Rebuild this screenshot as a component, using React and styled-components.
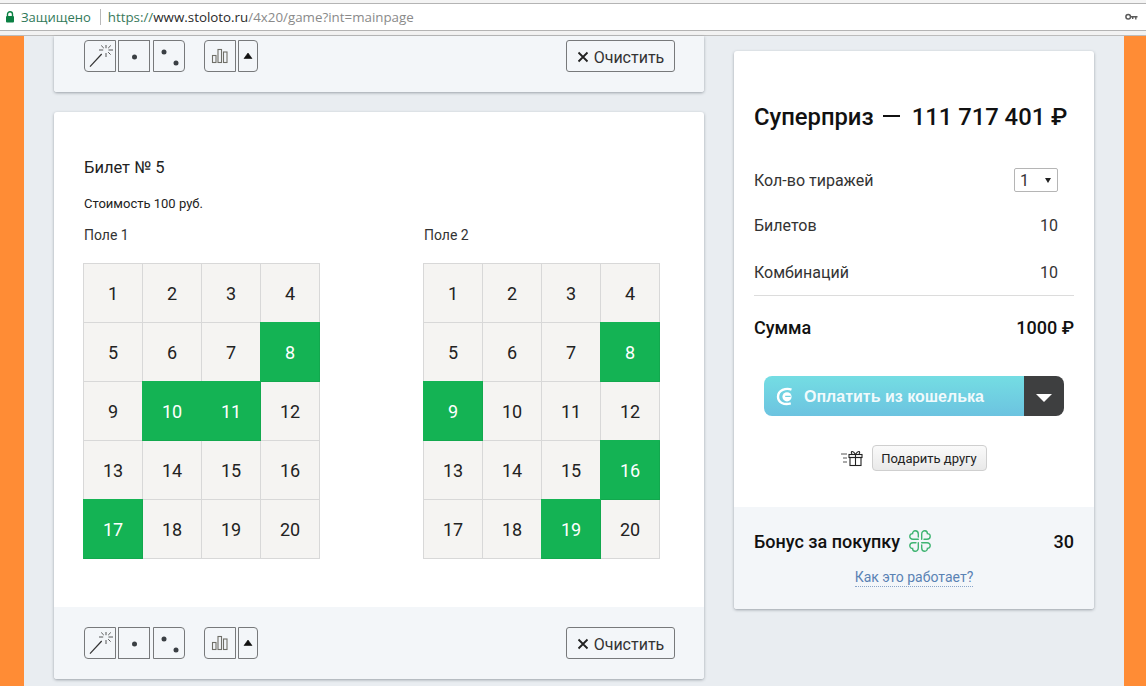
import React from "react";
import styled, { createGlobalStyle } from "styled-components";

const Global = createGlobalStyle`
  html, body { margin: 0; padding: 0; }
  body { font-family: Roboto, "Liberation Sans", sans-serif; color: #1a1a1a; background: #e9edf1; overflow: hidden; }
  * { box-sizing: border-box; }
`;

const Shell = styled.div`
  width: 1146px;
  height: 686px;
  display: flex;
  flex-direction: column;
  overflow: hidden;
`;

const Chrome = styled.header`
  height: 36px;
  flex: none;
  background: #f2f2f2;
  border-top: 3px solid #f4f4f4;
  border-bottom: 1px solid #bcbcbc;
`;

const AddressBar = styled.div`
  height: 28px;
  background: #fff;
  border-top: 1px solid #b4b4b4;
  border-bottom: 1px solid #b4b4b4;
  display: flex;
  align-items: center;
  padding: 0 8px 0 4px;
  font-family: "Open Sans", sans-serif;
  white-space: nowrap;
`;

const Secure = styled.span`
  color: #31795a;
  margin-left: 5px;
  font-size: 13px;
`;

const Sep = styled.span`
  width: 1px;
  height: 16px;
  background: #b9b9b9;
  margin: 0 7px 0 9px;
`;

const Url = styled.span`
  color: #8a8a8a;
  font-size: 13.35px;
  b { font-weight: 400; color: #2a2a2a; }
  i { font-style: normal; color: #3a7a5c; }
`;

const KeyWrap = styled.span`
  margin-left: auto;
  display: flex;
`;

const Page = styled.div`
  flex: 1;
  display: flex;
  min-height: 0;
`;

const Stripe = styled.div`
  width: ${(p) => p.$w}px;
  flex: none;
  background: #ff8c35;
`;

const Content = styled.main`
  flex: 1;
  display: flex;
  gap: 30px;
  padding: 0 30px;
  align-items: flex-start;
  min-width: 0;
`;

const LeftCol = styled.div`
  width: 650px;
  flex: none;
  display: flex;
  flex-direction: column;
  gap: 20px;
`;

const Card = styled.section`
  background: #fff;
  border-radius: 3px;
  box-shadow: 0 1px 3px rgba(60, 70, 80, 0.45);
  overflow: hidden;
`;

const TopCard = styled(Card)`
  border-radius: 0 0 3px 3px;
`;

const Toolbar = styled.div`
  background: #f3f6f9;
  display: flex;
  align-items: center;
  padding: ${(p) => (p.$top ? "4px" : "20px")} 29px 20px 30px;
`;

const TB = styled.button`
  width: ${(p) => p.$w || 32}px;
  height: 32px;
  padding: 0;
  margin-left: ${(p) => p.$ml || 0}px;
  background: transparent;
  border: 1px solid #77797b;
  border-radius: ${(p) => p.$r || "0"};
  display: flex;
  align-items: center;
  justify-content: center;
  color: #222;
`;

const Clear = styled.button`
  margin-left: auto;
  width: 109px;
  height: 32px;
  border: 1px solid #77797b;
  border-radius: 3px;
  background: transparent;
  display: flex;
  align-items: center;
  justify-content: center;
  gap: 5px;
  padding: 2px 0 0;
  font-family: Roboto, sans-serif;
  font-size: 16px;
  color: #333;
`;

const Ticket = styled.div`
  height: 495px;
  padding: 46px 0 0 29px;
`;

const TicketTitle = styled.h2`
  margin: 0 0 0 1px;
  font-size: 16.5px;
  font-weight: 400;
  line-height: 19px;
  color: #222;
`;

const Price = styled.p`
  margin: 19px 0 0 1px;
  font-size: 13px;
  line-height: 16px;
  color: #222;
`;

const Fields = styled.div`
  display: flex;
  gap: 103px;
  margin-top: 15px;
`;

const Field = styled.div`
  width: 237px;
`;

const FieldLabel = styled.div`
  margin-left: 1px;
  font-size: 14px;
  line-height: 16px;
  color: #333;
  margin-bottom: 20px;
`;

const Grid = styled.div`
  display: grid;
  grid-template-columns: repeat(4, 59px);
  grid-auto-rows: 59px;
  width: 237px;
  border-top: 1px solid #d8d8d8;
  border-left: 1px solid #d8d8d8;
`;

const Cell = styled.div`
  display: flex;
  align-items: center;
  justify-content: center;
  font-size: 18px;
  background: ${(p) => (p.$on ? "#14b354" : "#f5f4f2")};
  color: ${(p) => (p.$on ? "#fff" : "#222")};
  border-right: 1px solid ${(p) => (p.$on ? "#12a84e" : "#d8d8d8")};
  border-bottom: 1px solid ${(p) => (p.$on ? "#12a84e" : "#d8d8d8")};
  box-shadow: ${(p) =>
    p.$on ? "0 -1px 0 #14b354, -1px 0 0 #14b354, -1px -1px 0 #14b354" : "none"};
`;

const Side = styled(Card)`
  width: 360px;
  flex: none;
  margin-top: 15px;
`;

const SideMain = styled.div`
  height: 456px;
  padding: 52px 20px 0;
`;

const Jackpot = styled.div`
  display: flex;
  align-items: center;
  justify-content: flex-start;
  font-size: 23.8px;
  font-weight: 500;
  line-height: 28px;
  color: #111;
  white-space: nowrap;
`;

const Dash = styled.span`
  width: 17px;
  height: 2px;
  background: #111;
  margin: 0 12px 2px 9px;
`;

const Row = styled.div`
  display: flex;
  align-items: center;
  justify-content: space-between;
  height: ${(p) => p.$h || 24}px;
  margin-top: ${(p) => p.$mt || 0}px;
  font-size: 16px;
  color: #333;
`;

const Num = styled.span`
  margin-right: 16px;
`;

const Select = styled.div`
  width: 44px;
  height: 24px;
  margin-right: 16px;
  border: 1px solid #b5b5b5;
  border-radius: 2px;
  display: flex;
  align-items: center;
  justify-content: space-between;
  padding: 0 6px 0 5px;
  color: #333;
`;

const Caret = styled.span`
  width: 0;
  height: 0;
  border-left: 3px solid transparent;
  border-right: 3px solid transparent;
  border-top: 5px solid #222;
`;

const Divider = styled.div`
  height: 1px;
  background: #dcdcdc;
  margin-top: 11px;
`;

const Total = styled(Row)`
  font-size: 18px;
  font-weight: 500;
  color: #111;
  margin-top: 19px;
`;

const Pay = styled.div`
  width: 300px;
  height: 40px;
  margin: 37px 0 0 10px;
  display: flex;
  border-radius: 8px;
  overflow: hidden;
`;

const PayMain = styled.div`
  flex: 1;
  background: linear-gradient(#74dde3, #6cc3e0);
  display: flex;
  align-items: center;
  padding: 1px 0 0 12px;
  gap: 9px;
  color: rgba(255, 255, 255, 0.92);
  font-family: "Liberation Sans", Arial, sans-serif;
  font-weight: 700;
  font-size: 16px;
`;

const PayArrow = styled.div`
  width: 40px;
  background: #3e3f40;
  display: flex;
  align-items: center;
  justify-content: center;
  padding-top: 3px;
`;

const ArrowDown = styled.span`
  width: 0;
  height: 0;
  border-left: 8px solid transparent;
  border-right: 8px solid transparent;
  border-top: 8px solid #fff;
`;

const GiftRow = styled.div`
  display: flex;
  align-items: center;
  justify-content: center;
  gap: 8px;
  margin: 29px 0 0 -2px;
`;

const GiftBtn = styled.button`
  width: 115px;
  height: 26px;
  padding: 0;
  border: 1px solid #cfcfcf;
  border-radius: 4px;
  background: linear-gradient(#fafafa, #e9e9e9);
  font-family: Roboto, sans-serif;
  font-size: 13px;
  color: #222;
`;

const SideFoot = styled.div`
  height: 102px;
  background: #f3f6f9;
  padding: 22px 20px 0;
`;

const Bonus = styled.div`
  display: flex;
  align-items: center;
  height: 24px;
  font-size: 18px;
  font-weight: 500;
  color: #111;
`;

const BonusValue = styled.span`
  margin-left: auto;
`;

const CloverWrap = styled.span`
  display: flex;
  margin-left: 8px;
`;

const HowWrap = styled.div`
  text-align: center;
  margin-top: 14px;
`;

const How = styled.a`
  font-size: 14px;
  line-height: 18px;
  display: inline-block;
  color: #5a82b4;
  border-bottom: 1px dotted #8aa5c8;
`;

const Lock = () => (
  <svg width="12" height="14" viewBox="0 0 12 14">
    <path d="M3.5 6V4.2a2.5 2.5 0 0 1 5 0V6" fill="none" stroke="#0b8043" strokeWidth="1.4" />
    <rect x="2" y="6" width="8" height="6.5" rx="1" fill="#0b8043" />
  </svg>
);

const Key = () => (
  <svg width="13" height="8" viewBox="0 0 13 8">
    <circle cx="3.2" cy="3.8" r="2.3" fill="none" stroke="#5a5a5a" strokeWidth="1.5" />
    <path d="M5.5 3h7v1.5h-1V6.5h-1.4V4.5H8.4V6H7V4.5H5.5z" fill="#5a5a5a" />
  </svg>
);

const Wand = () => (
  <svg width="30" height="30" viewBox="0 0 30 30">
    <path d="M5 25.7 L16.7 13" stroke="#333" strokeWidth="1.2" />
    <path d="M21 4v3.2M21 12v4M14 9h4.2M23.5 9h4.5M16.2 4.5l2.6 2.6M25.8 4.5l-2.6 2.6M23.2 11.2l2.4 2.4" stroke="#444" strokeWidth="0.9" fill="none" />
  </svg>
);

const OneDot = () => (
  <svg width="30" height="30" viewBox="0 0 30 30">
    <circle cx="15.5" cy="16" r="2.5" fill="#3a3f44" />
  </svg>
);

const TwoDots = () => (
  <svg width="30" height="30" viewBox="0 0 30 30">
    <circle cx="10" cy="11" r="2.5" fill="#3a3f44" />
    <circle cx="22" cy="22" r="2.5" fill="#3a3f44" />
  </svg>
);

const Bars = () => (
  <svg width="20" height="20" viewBox="0 0 20 20">
    <g fill="none" stroke="#6f6f68" strokeWidth="1.1">
      <rect x="2.5" y="9.5" width="3.5" height="7" />
      <rect x="8" y="3.5" width="3.5" height="13" />
      <rect x="13.5" y="6" width="3.5" height="10.5" />
    </g>
  </svg>
);

const Up = () => (
  <svg width="10" height="8" viewBox="0 0 10 8">
    <path d="M5 1 L9 6.5 H1 Z" fill="#111" stroke="#111" strokeWidth="0.6" />
  </svg>
);

const Cross = () => (
  <svg width="12" height="12" viewBox="0 0 12 12">
    <path d="M1.5 1.5 L10.5 10.5 M10.5 1.5 L1.5 10.5" stroke="#222" strokeWidth="1.8" />
  </svg>
);

const WalletLogo = () => (
  <svg width="19" height="19" viewBox="0 0 19 19">
    <path d="M15.5 2.6 C10 0.6 2 3 2 9.8 C2 15.5 8 18.4 14.8 16.4" fill="none" stroke="#fff" strokeWidth="2.4" />
    <circle cx="11" cy="9.8" r="4.6" fill="#fff" />
    <path d="M9.2 9.3 H14.6" stroke="#72d0e2" strokeWidth="1.3" />
  </svg>
);

const Gift = () => (
  <svg width="24" height="18" viewBox="0 0 24 18">
    <path d="M1 5h6M3 9h4M3 13h4" stroke="#555" strokeWidth="1" />
    <g fill="none" stroke="#222" strokeWidth="1.1">
      <rect x="9" y="5.5" width="13" height="3" />
      <rect x="10" y="8.5" width="11" height="8" />
      <path d="M15.5 5.5v11M15.5 5.5 C13 1 10 2 12 5M15.5 5.5 C18 1 21 2 19 5" />
    </g>
  </svg>
);

const LOBES = [0, 90, 180, 270];

const Clover = () => (
  <svg width="24" height="24" viewBox="0 0 24 24">
    <g fill="none" stroke="#3fb472" strokeWidth="1.4" strokeLinecap="round">
      {LOBES.map((a) => (
        <path
          key={a}
          transform={`rotate(${a} 12 12)`}
          d="M10.3 10.3 H5 C2.8 10.3 1.6 8.6 1.8 7 C2 5.4 3.2 4.6 4.6 4.6 C4.6 3 5.6 1.8 7.2 1.8 C8.9 1.8 10.3 3 10.3 5 V8"
        />
      ))}
    </g>
  </svg>
);

const NUMBERS = Array.from({ length: 20 }, (_, i) => i + 1);

const Tools = ({ top }) => (
  <Toolbar $top={top}>
    <TB $r="4px 0 0 4px"><Wand /></TB>
    <TB $ml={2}><OneDot /></TB>
    <TB $ml={3} $r="0 4px 4px 0"><TwoDots /></TB>
    <TB $ml={19} $r="4px 0 0 4px"><Bars /></TB>
    <TB $ml={2} $w={20} $r="0 4px 4px 0"><Up /></TB>
    <Clear><Cross />Очистить</Clear>
  </Toolbar>
);

const NumberField = ({ label, picked }) => (
  <Field>
    <FieldLabel>{label}</FieldLabel>
    <Grid>
      {NUMBERS.map((n) => (
        <Cell key={n} $on={picked.includes(n)}>{n}</Cell>
      ))}
    </Grid>
  </Field>
);

export default function App() {
  return (
    <Shell>
      <Global />
      <Chrome>
        <AddressBar>
          <Lock />
          <Secure>Защищено</Secure>
          <Sep />
          <Url><i>https://</i><b>www.stoloto.ru</b>/4x20/game?int=mainpage</Url>
          <KeyWrap><Key /></KeyWrap>
        </AddressBar>
      </Chrome>
      <Page>
        <Stripe $w={24} />
        <Content>
          <LeftCol>
            <TopCard><Tools top /></TopCard>
            <Card>
              <Ticket>
                <TicketTitle>Билет № 5</TicketTitle>
                <Price>Стоимость 100 руб.</Price>
                <Fields>
                  <NumberField label="Поле 1" picked={[8, 10, 11, 17]} />
                  <NumberField label="Поле 2" picked={[8, 9, 16, 19]} />
                </Fields>
              </Ticket>
              <Tools />
            </Card>
          </LeftCol>
          <Side>
            <SideMain>
              <Jackpot>Суперприз<Dash />111 717 401 ₽</Jackpot>
              <Row $mt={37}>Кол-во тиражей<Select>1<Caret /></Select></Row>
              <Row $mt={21}>Билетов<Num>10</Num></Row>
              <Row $mt={23}>Комбинаций<Num>10</Num></Row>
              <Divider />
              <Total>Сумма<span>1000 ₽</span></Total>
              <Pay>
                <PayMain><WalletLogo />Оплатить из кошелька</PayMain>
                <PayArrow><ArrowDown /></PayArrow>
              </Pay>
              <GiftRow><Gift /><GiftBtn>Подарить другу</GiftBtn></GiftRow>
            </SideMain>
            <SideFoot>
              <Bonus>Бонус за покупку<CloverWrap><Clover /></CloverWrap><BonusValue>30</BonusValue></Bonus>
              <HowWrap><How>Как это работает?</How></HowWrap>
            </SideFoot>
          </Side>
        </Content>
        <Stripe $w={22} />
      </Page>
    </Shell>
  );
}
